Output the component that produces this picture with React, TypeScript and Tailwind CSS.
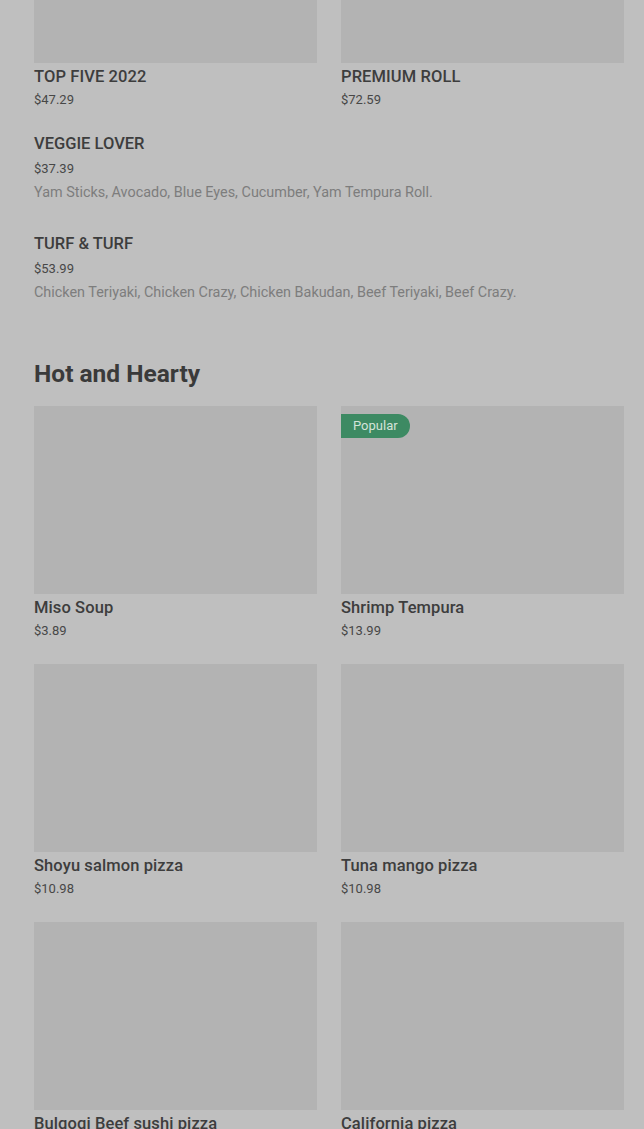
import React from "react";

const font = { fontFamily: "Roboto, 'Liberation Sans', Arial, sans-serif" };

function Card({ name, price, img = "h-[188px]", badge }: { name: string; price: string; img?: string; badge?: boolean }) {
  return (
    <div className="flex flex-col">
      <div className={`relative w-full bg-[#b3b3b3] ${img}`}>
        {badge && (
          <div className="absolute left-0 top-[8px] h-[24px] px-[12px] flex items-center rounded-r-full bg-[#3d8a63] text-[#d3e3d9] text-[13px]">
            Popular
          </div>
        )}
      </div>
      <div className="mt-[4px] text-[16.5px] leading-[20px] font-medium tracking-[0.1px] text-[#3d3d3d]">{name}</div>
      <div className="mt-[3px] text-[13px] leading-[20px] text-[#474747]">{price}</div>
    </div>
  );
}

function ListItem({ name, price, desc }: { name: string; price: string; desc: string }) {
  return (
    <div className="flex flex-col">
      <div className="text-[16.5px] leading-[20px] font-medium text-[#3d3d3d]">{name}</div>
      <div className="mt-[5px] text-[13px] leading-[20px] text-[#474747]">{price}</div>
      <div className="mt-[4px] text-[14.4px] leading-[20px] text-[#7d7d7d]">{desc}</div>
    </div>
  );
}

export default function App() {
  return (
    <div className="min-h-[1129px] w-[644px] bg-[#bfbfbf] pl-[34px] pr-[20px] overflow-hidden" style={font}>
      <div className="grid grid-cols-2 gap-x-[24px]">
        <Card name="TOP FIVE 2022" price="$47.29" img="h-[63px]" />
        <Card name="PREMIUM ROLL" price="$72.59" img="h-[63px]" />
      </div>
      <div className="mt-[24px] flex flex-col gap-[31px]">
        <ListItem name="VEGGIE LOVER" price="$37.39" desc="Yam Sticks, Avocado, Blue Eyes, Cucumber, Yam Tempura Roll." />
        <ListItem name="TURF & TURF" price="$53.99" desc="Chicken Teriyaki, Chicken Crazy, Chicken Bakudan, Beef Teriyaki, Beef Crazy." />
      </div>
      <h2 className="mt-[55px] text-[24.5px] leading-[32px] font-bold text-[#3a3a3a]">Hot and Hearty</h2>
      <div className="mt-[16px] grid grid-cols-2 gap-x-[24px] gap-y-[23px]">
        <Card name="Miso Soup" price="$3.89" />
        <Card name="Shrimp Tempura" price="$13.99" badge />
        <Card name="Shoyu salmon pizza" price="$10.98" />
        <Card name="Tuna mango pizza" price="$10.98" />
        <Card name="Bulgogi Beef sushi pizza" price="$10.98" />
        <Card name="California pizza" price="$10.98" />
      </div>
    </div>
  );
}
